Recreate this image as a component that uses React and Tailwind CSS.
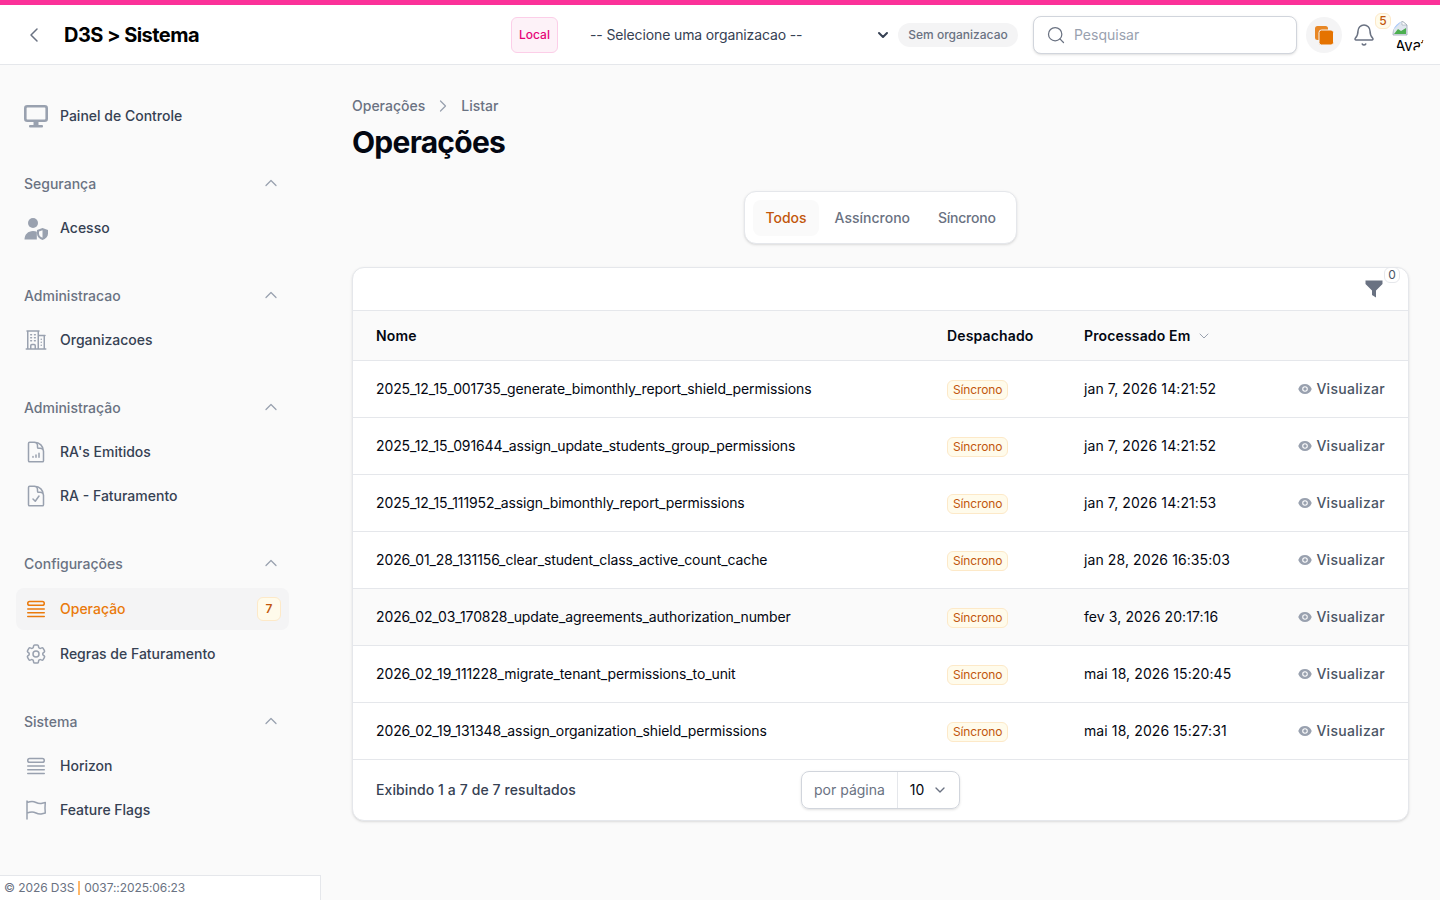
import { ChevronLeft, ChevronUp, ChevronDown, ChevronRight, Search, Bell } from 'lucide-react';

const rows = [
  ['2025_12_15_001735_generate_bimonthly_report_shield_permissions', 'jan 7, 2026 14:21:52'],
  ['2025_12_15_091644_assign_update_students_group_permissions', 'jan 7, 2026 14:21:52'],
  ['2025_12_15_111952_assign_bimonthly_report_permissions', 'jan 7, 2026 14:21:53'],
  ['2026_01_28_131156_clear_student_class_active_count_cache', 'jan 28, 2026 16:35:03'],
  ['2026_02_03_170828_update_agreements_authorization_number', 'fev 3, 2026 20:17:16'],
  ['2026_02_19_111228_migrate_tenant_permissions_to_unit', 'mai 18, 2026 15:20:45'],
  ['2026_02_19_131348_assign_organization_shield_permissions', 'mai 18, 2026 15:27:31'],
];

// heroicons outline, as filament draws them in the sidebar
const Hero = ({ d, className = 'text-gray-400' }) => (
  <svg className={`w-6 h-6 shrink-0 ${className}`} viewBox="0 0 24 24" fill="none" stroke="currentColor" strokeWidth="1.5" strokeLinecap="round" strokeLinejoin="round">
    <path d={d} />
  </svg>
);

const ICONS = {
  building: 'M2.25 21h19.5m-18-18v18m10.5-18v18m6-13.5V21M6.75 6.75h.75m-.75 3h.75m-.75 3h.75m3-6h.75m-.75 3h.75m-.75 3h.75M6.75 21v-3.375c0-.621.504-1.125 1.125-1.125h2.25c.621 0 1.125.504 1.125 1.125V21M3 3h12m-.75 4.5H21m-3.750 3.750h.008v.008h-.008v-.008Zm0 3h.008v.008h-.008v-.008Zm0 3h.008v.008h-.008v-.008Z',
  docChart: 'M19.5 14.25v-2.625a3.375 3.375 0 0 0-3.375-3.375h-1.5A1.125 1.125 0 0 1 13.5 7.125v-1.5a3.375 3.375 0 0 0-3.375-3.375H8.25m2.25 0H5.625c-.621 0-1.125.504-1.125 1.125v17.25c0 .621.504 1.125 1.125 1.125h12.75c.621 0 1.125-.504 1.125-1.125V11.25a9 9 0 0 0-9-9ZM9 17.25v-.75m3 .75v-2.25m3 2.25v-4',
  docCheck: 'M10.125 2.25h-4.5c-.621 0-1.125.504-1.125 1.125v17.25c0 .621.504 1.125 1.125 1.125h12.75c.621 0 1.125-.504 1.125-1.125v-9M10.125 2.25h.375a9 9 0 0 1 9 9v.375M10.125 2.25A3.375 3.375 0 0 1 13.5 5.625v1.5c0 .621.504 1.125 1.125 1.125h1.5a3.375 3.375 0 0 1 3.375 3.375M9 15l2.25 2.25L15 12',
  queue: 'M3.75 12h16.5m-16.5 3.75h16.5M3.75 19.5h16.5M5.625 4.5h12.75a1.875 1.875 0 0 1 0 3.75H5.625a1.875 1.875 0 0 1 0-3.75Z',
  cog: 'M9.594 3.94c.09-.542.56-.94 1.11-.94h2.593c.55 0 1.02.398 1.11.94l.213 1.281c.063.374.313.686.645.87.074.04.147.083.22.127.325.196.72.257 1.075.124l1.217-.456a1.125 1.125 0 0 1 1.37.49l1.296 2.247a1.125 1.125 0 0 1-.26 1.431l-1.003.827c-.293.241-.438.613-.43.992a7.723 7.723 0 0 1 0 .255c-.008.378.137.75.43.991l1.004.827c.424.35.534.955.26 1.43l-1.298 2.247a1.125 1.125 0 0 1-1.369.491l-1.217-.456c-.355-.133-.75-.072-1.076.124a6.47 6.47 0 0 1-.22.128c-.331.183-.581.495-.644.869l-.213 1.281c-.09.543-.56.94-1.11.94h-2.594c-.55 0-1.019-.398-1.11-.94l-.213-1.281c-.062-.374-.312-.686-.644-.87a6.52 6.52 0 0 1-.22-.127c-.325-.196-.72-.257-1.076-.124l-1.217.456a1.125 1.125 0 0 1-1.369-.49l-1.297-2.247a1.125 1.125 0 0 1 .26-1.431l1.004-.827c.292-.24.437-.613.43-.991a6.932 6.932 0 0 1 0-.255c.007-.38-.138-.751-.43-.992l-1.004-.827a1.125 1.125 0 0 1-.26-1.43l1.297-2.247a1.125 1.125 0 0 1 1.37-.491l1.216.456c.356.133.751.072 1.076-.124.072-.044.146-.086.22-.128.332-.183.582-.495.644-.869l.214-1.28ZM15 12a3 3 0 1 1-6 0 3 3 0 0 1 6 0Z',
  flag: 'M3 3v1.5M3 21v-6m0 0 2.77-.693a9 9 0 0 1 6.208.682l.108.054a9 9 0 0 0 6.086.71l3.114-.732a48.524 48.524 0 0 1-.005-10.499l-3.11.732a9 9 0 0 1-6.085-.711l-.108-.054a9 9 0 0 0-6.208-.682L3 4.5M3 15V4.5',
};

const Monitor = () => (
  <svg className="w-6 h-6 shrink-0 text-gray-400" viewBox="0 0 24 24" fill="currentColor">
    <rect x="1.300" y="2.300" width="21.400" height="14.400" rx="2" fill="none" stroke="currentColor" strokeWidth="2.600" />
    <rect x="9.500" y="18" width="5" height="3" />
    <rect x="5" y="21" width="14" height="2.500" rx="1" />
  </svg>
);

const UserShield = () => (
  <svg className="w-6 h-6 shrink-0 text-gray-400" viewBox="0 0 24 24" fill="currentColor">
    <circle cx="9" cy="7" r="5" />
    <path d="M0.500 23.500c0-5 3.500-8.500 8.500-8.500 1.500 0 2.700.3 3.800.8v7.700z" />
    <path fillRule="evenodd" clipRule="evenodd" d="M18.500 12l5.500 2v3.800c0 3-2.300 5.200-5.500 6.200-3.200-1-5.500-3.200-5.500-6.200v-3.800zm0 2.200l-3.500 1.200v2.400c0 1.800 1.400 3.200 3.500 4z" />
  </svg>
);

const NavItem = ({ icon, label }) => (
  <li className="flex items-center gap-3 h-9 px-2">
    {icon}
    <span className="text-sm font-medium text-gray-700">{label}</span>
  </li>
);

const NavGroup = ({ title, children }) => (
  <div className="flex flex-col gap-4">
    <div className="flex items-center justify-between h-5 px-2">
      <span className="text-sm font-medium text-gray-500">{title}</span>
      <ChevronUp className="w-5 h-5 -mt-0.5 text-gray-400" strokeWidth={1.5} />
    </div>
    <ul className="flex flex-col gap-2">{children}</ul>
  </div>
);

const Sidebar = () => (
  <aside className="w-[320px] shrink-0 flex flex-col justify-between h-[835px]">
    <nav className="flex flex-col gap-10 pt-[33px] pl-4 pr-[31px]">
      <ul><NavItem icon={<Monitor />} label="Painel de Controle" /></ul>
      <NavGroup title="Segurança">
        <NavItem icon={<UserShield />} label="Acesso" />
      </NavGroup>
      <NavGroup title="Administracao">
        <NavItem icon={<Hero d={ICONS.building} />} label="Organizacoes" />
      </NavGroup>
      <NavGroup title="Administração">
        <NavItem icon={<Hero d={ICONS.docChart} />} label="RA's Emitidos" />
        <NavItem icon={<Hero d={ICONS.docCheck} />} label="RA - Faturamento" />
      </NavGroup>
      <NavGroup title="Configurações">
        <li className="flex items-center gap-3 h-[42px] -my-0.5 px-2 rounded-lg bg-[#f4f4f5]">
          <Hero d={ICONS.queue} className="text-[#ea7a0c]" />
          <span className="text-sm font-medium text-[#ea7a0c]">Operação</span>
          <span className="ml-auto flex items-center justify-center w-6 h-6 rounded-md bg-[#fffbeb] border border-[#fde9c8] text-xs font-semibold text-[#c2570c]">7</span>
        </li>
        <NavItem icon={<Hero d={ICONS.cog} />} label="Regras de Faturamento" />
      </NavGroup>
      <NavGroup title="Sistema">
        <NavItem icon={<Hero d={ICONS.queue} />} label="Horizon" />
        <NavItem icon={<Hero d={ICONS.flag} />} label="Feature Flags" />
      </NavGroup>
    </nav>
    <div className="w-[321px] h-[25px] flex items-center pl-1 bg-white border-t border-r border-gray-200 text-xs tracking-[-0.08px] text-gray-500">
      © 2026 D3S
      <span className="w-0.5 h-3.5 mx-1 bg-orange-300" />
      0037::2025:06:23
    </div>
  </aside>
);

const Topbar = () => (
  <header className="flex items-center h-[60px] pt-px bg-white border-b border-gray-200 pl-[22px] pr-4">
    <ChevronLeft className="w-6 h-6 text-gray-500" strokeWidth={1.5} />
    <span className="ml-[18px] text-xl font-bold tracking-[-0.55px] text-black">D3S &gt; Sistema</span>
    <div className="ml-auto flex items-center">
      <span className="flex items-center justify-center w-[47px] h-9 rounded-md bg-pink-50 border border-pink-200 text-xs font-medium text-pink-600">Local</span>
      <div className="flex items-center justify-between w-[335px] pl-8 pr-[2px] text-sm tracking-[-0.13px] text-gray-700">
        -- Selecione uma organizacao --
        <ChevronDown className="w-4 h-4 text-gray-700" strokeWidth={3} />
      </div>
      <span className="ml-[5px] flex items-center justify-center w-[120px] h-6 rounded-full bg-[#f4f4f5] text-xs font-medium text-gray-500">Sem organizacao</span>
      <div className="ml-[15px] flex items-center gap-2 w-[264px] h-[38px] px-3 rounded-lg bg-white border border-gray-300 shadow-sm">
        <Search className="w-5 h-5 text-gray-500" strokeWidth={1.5} />
        <span className="text-sm text-gray-400">Pesquisar</span>
      </div>
      <div className="ml-[9px] flex items-center justify-center w-9 h-9 rounded-full bg-[#f4f4f5]">
        <svg className="w-5 h-5 text-[#e57300]" viewBox="0 0 20 20" fill="currentColor">
          <rect x="1" y="1" width="13" height="14" rx="2.500" opacity="0.85" />
          <rect x="5" y="5" width="14.500" height="15" rx="2.500" stroke="#f4f4f5" strokeWidth="1" />
        </svg>
      </div>
      <div className="relative ml-[10px] w-6 h-6">
        <Bell className="w-6 h-6 text-gray-500" strokeWidth={1.5} />
        <span className="absolute -top-[10px] left-[23px] flex items-center justify-center w-[16px] h-[16px] rounded-md bg-[#fffbeb] border border-[#fde9c8] text-xs font-medium text-[#c2570c]">5</span>
      </div>
      <div className="ml-[16px] mt-[1px] w-8 h-8 rounded-full overflow-hidden text-black text-base leading-none">
        <svg className="w-4 h-4" viewBox="0 0 16 16">
          <path d="M1 1h9l5 4v10H1z" fill="#dfe6ee" stroke="#9aa5b1" strokeWidth="0.8" />
          <path d="M2 14l4-5 3 2 5-3v6z" fill="#4caf50" />
          <path d="M2 2h7l-7 7z" fill="#a8c7fa" />
          <path d="M10 1v4h5z" fill="#fff" stroke="#9aa5b1" strokeWidth="0.6" />
        </svg>
        <span className="block pl-[3px] mt-[2px] text-[15px]">Avatar</span>
      </div>
    </div>
  </header>
);

const Table = () => (
  <div className="rounded-xl bg-white border border-gray-200 shadow-sm overflow-hidden">
    <div className="relative h-[42px]">
      <svg className="absolute right-[24px] top-[11px] w-5 h-5 text-gray-500" viewBox="0 0 20 20" fill="currentColor">
        <path d="M1.500 1.500h17v3.500L12 11.500v7l-4-2.500v-4.500L1.500 5z" />
      </svg>
      <span className="absolute right-[8px] -top-px flex items-center justify-center w-4 h-4 rounded-md bg-white border border-gray-200 text-xs text-gray-600">0</span>
    </div>
    <table className="w-full table-fixed text-sm text-left">
      <colgroup>
        <col className="w-[571px]" />
        <col className="w-[137px]" />
        <col className="w-[210px]" />
        <col />
      </colgroup>
      <thead className="bg-[#fafafa]">
        <tr className="h-[50px] border-y border-gray-200 tracking-[0.15px]">
          <th className="pl-[23px] font-semibold text-gray-950">Nome</th>
          <th className="pl-[23px] font-semibold text-gray-950">Despachado</th>
          <th className="pl-[23px] font-semibold text-gray-950">
            <span className="flex items-center gap-[6px] whitespace-nowrap">
              Processado Em
              <ChevronDown className="w-4 h-4 text-gray-400" strokeWidth={1.5} />
            </span>
          </th>
          <th />
        </tr>
      </thead>
      <tbody>
        {rows.map(([name, date], i) => (
          <tr key={name} className={`h-[57px] border-b border-gray-200 ${i === 4 ? 'bg-[#fafafa]' : ''}`}>
            <td className="pl-[23px] text-gray-950 tracking-[-0.11px] whitespace-nowrap">{name}</td>
            <td className="pl-[23px]">
              <span className="inline-flex items-center h-5 px-[5px] rounded-md bg-[#fffbeb] border border-[#fde9c8] text-xs tracking-[-0.12px] text-[#c2570c]">Síncrono</span>
            </td>
            <td className="pl-[23px] text-gray-950 tracking-[0.1px] whitespace-nowrap">{date}</td>
            <td className="pr-[23px]">
              <span className="flex items-center justify-end gap-1 font-medium tracking-[0.3px] text-gray-600">
                <svg className="w-[14px] h-[14px] text-gray-400" viewBox="0 0 20 20" fill="currentColor">
                  <path d="M10 12.500a2.500 2.500 0 1 0 0-5 2.500 2.500 0 0 0 0 5Z" />
                  <path fillRule="evenodd" clipRule="evenodd" d="M.664 10.590a1.651 1.651 0 0 1 0-1.186A10.004 10.004 0 0 1 10 3c4.257 0 7.893 2.660 9.336 6.410.147.381.146.804 0 1.186A10.004 10.004 0 0 1 10 17c-4.257 0-7.893-2.660-9.336-6.410ZM14 10a4 4 0 1 1-8 0 4 4 0 0 1 8 0Z" />
                </svg>
                Visualizar
              </span>
            </td>
          </tr>
        ))}
      </tbody>
    </table>
    <div className="flex items-center h-[60px] pl-[23px]">
      <span className="w-[425px] text-sm font-medium tracking-[0.1px] text-gray-700">Exibindo 1 a 7 de 7 resultados</span>
      <div className="flex items-center h-[38px] rounded-lg border border-gray-300 shadow-sm text-sm">
        <span className="flex items-center h-full px-3 border-r border-gray-200 text-gray-500">por página</span>
        <span className="flex items-center gap-2 pl-3 pr-[11px] text-gray-950">
          10
          <ChevronDown className="w-4 h-4 text-gray-500" strokeWidth={2} />
        </span>
      </div>
    </div>
  </div>
);

export default function App() {
  return (
    <div className="h-[900px] overflow-hidden bg-[#fafafa] font-['Inter',sans-serif]">
      <div className="h-[5px] bg-[#fb3199]" />
      <Topbar />
      <div className="flex">
        <Sidebar />
        <main className="flex-1 pl-8 pr-[31px] pt-[31px]">
          <div className="flex items-center gap-2 text-sm font-medium text-gray-500">
            Operações
            <ChevronRight className="w-5 h-5 text-gray-400" strokeWidth={1.5} />
            Listar
          </div>
          <h1 className="mt-2 text-3xl font-bold tracking-tight text-gray-950">Operações</h1>
          <div className="flex justify-center mt-[31px]">
            <div className="flex items-center gap-1 h-[53px] px-2 rounded-xl bg-white border border-gray-200 shadow-sm text-sm font-medium text-gray-500">
              <span className="flex items-center h-9 px-3 rounded-lg bg-[#fafafa] text-[#c2570c]">Todos</span>
              <span className="flex items-center h-9 px-3">Assíncrono</span>
              <span className="flex items-center h-9 px-3 tracking-[-0.25px]">Síncrono</span>
            </div>
          </div>
          <div className="mt-[23px]"><Table /></div>
        </main>
      </div>
    </div>
  );
}
